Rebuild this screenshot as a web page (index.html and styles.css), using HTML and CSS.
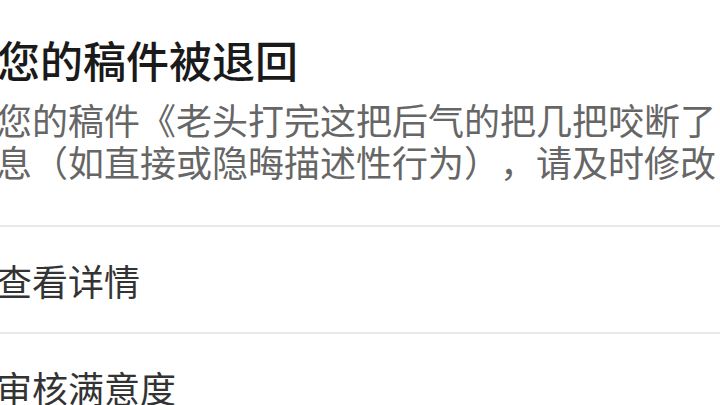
FILE: index.html
```html
<!DOCTYPE html>
<html lang="zh-CN">
<head>
    <meta charset="UTF-8">
    <meta name="viewport" content="width=device-width, initial-scale=1.0">
    <title>您的稿件被退回</title>
    <link rel="stylesheet" href="styles.css">
</head>
<body>
    <div class="notice">
        <h1 class="title">您的稿件被退回</h1>
        <div class="desc">
            <p>您的稿件《老头打完这把后气的把几把咬断了</p>
            <p>息（如直接或隐晦描述性行为），请及时修改</p>
        </div>
    </div>
    <div class="menu">
        <div class="menu-item">查看详情</div>
        <div class="menu-item">审核满意度</div>
    </div>
</body>
</html>
```

FILE: styles.css
```css
body{
    margin: 0;
    background-color: #fff;
    font-family: "Noto Sans CJK SC", "Noto Sans", sans-serif;
    overflow: hidden;
    text-spacing-trim: space-all;
}
.notice{
    padding-top: 30px;
    margin-left: -4px;
}
.title{
    margin: 0 0 0 1px;
    font-size: 43px;
    line-height: 58px;
    font-weight: 500;
    color: #1a1a1a;
    white-space: nowrap;
}
.desc{
    margin-top: 10px;
    font-size: 36px;
    line-height: 42px;
    color: #666;
}
.desc p{
    margin: 0;
    white-space: nowrap;
}
.menu{
    margin-top: 43px;
}
.menu-item{
    display: flex;
    align-items: center;
    height: 105px;
    margin-left: -4px;
    border-top: 2px solid #e9e9e9;
    font-size: 36px;
    color: #333;
    white-space: nowrap;
}
```
